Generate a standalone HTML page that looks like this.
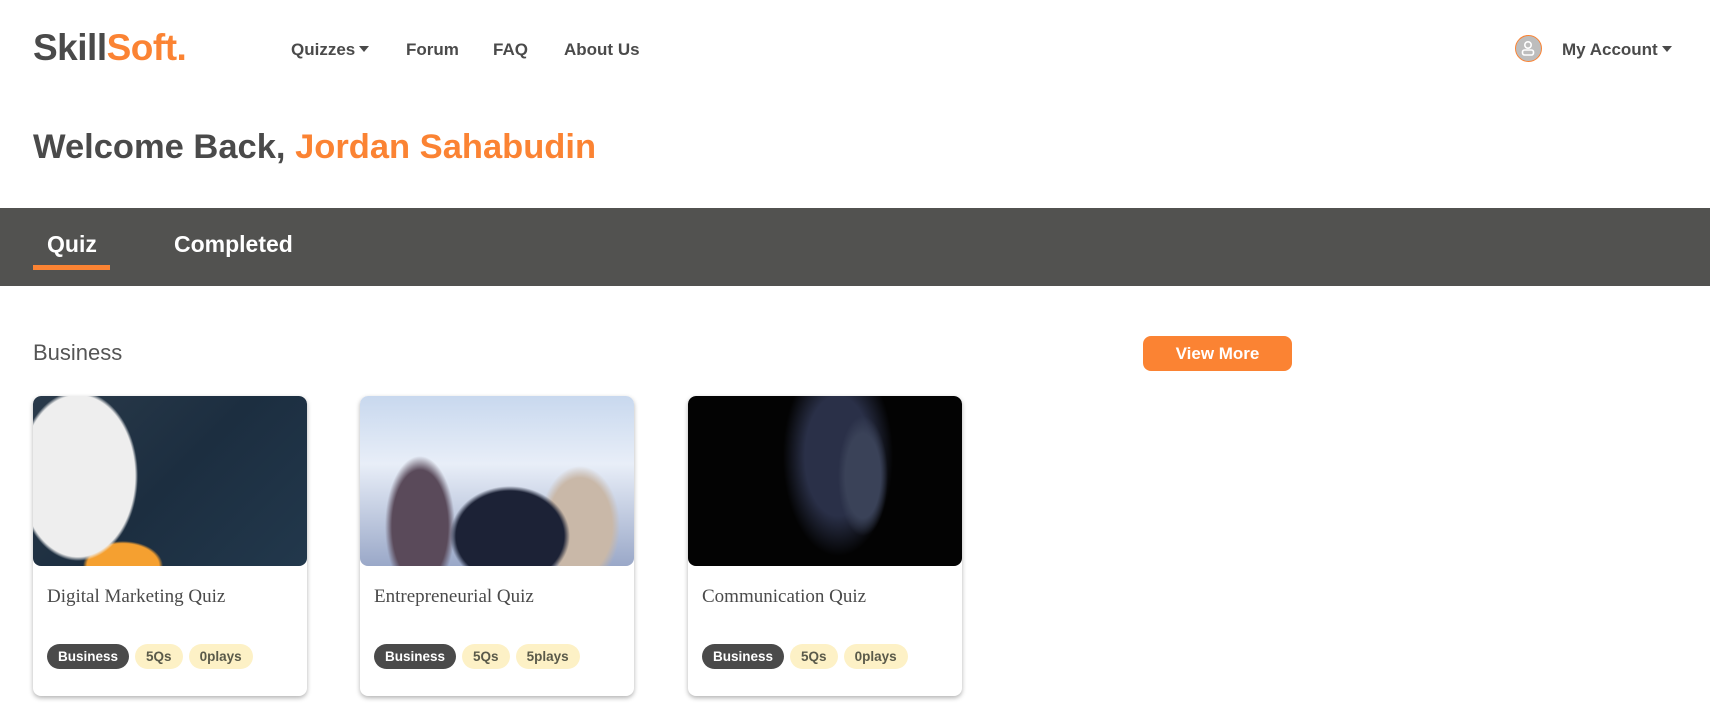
<!DOCTYPE html>
<html><head><meta charset="utf-8"><style>
*{margin:0;padding:0;box-sizing:border-box}
body{width:1710px;height:723px;background:#fff;font-family:"Liberation Sans",sans-serif;position:relative;overflow:hidden;color:#4a4a4a}
.abs{position:absolute;white-space:nowrap}
.logo{left:33px;top:27px;font-size:37px;font-weight:bold;color:#4a4a4a;letter-spacing:-0.5px}
.logo span{color:#fb8333}
.nav{top:40px;font-size:17px;font-weight:bold;color:#4a4a4a}
.caret{display:inline-block;width:0;height:0;border-left:5px solid transparent;border-right:5px solid transparent;border-top:6px solid #4a4a4a;vertical-align:middle;margin-left:4px;margin-top:-3px}
.welcome{left:33px;top:128px;font-size:34.5px;font-weight:bold;color:#4a4a4a}
.welcome span{color:#fb8333}
.bar{left:0;top:208px;width:1710px;height:78px;background:#525250}
.tab{top:231px;font-size:23px;font-weight:bold;color:#fff}
.uline{left:33px;top:265px;width:77px;height:5px;background:#fb8333}
.card{position:absolute;top:396px;width:274px;height:300px;background:#fff;border-radius:8px;box-shadow:0 2px 5px rgba(0,0,0,.3);overflow:hidden}
.img{height:170px;border-radius:8px}
.title{position:absolute;left:14px;top:190px;font-family:"Liberation Serif",serif;font-size:19px;color:#4a4a4a}
.pills{position:absolute;left:14px;top:248px;display:flex;gap:6px}
.pill{height:25px;line-height:25px;border-radius:13px;padding:0 11px;font-size:13.5px;font-weight:bold;background:#fdf1c6;color:#5a5a4a}
.pill.d{background:#4a4a4a;color:#fff}
</style></head><body>
<div class="abs logo">Skill<span>Soft.</span></div>
<div class="abs nav" style="left:291px">Quizzes<span class="caret"></span></div>
<div class="abs nav" style="left:406px">Forum</div>
<div class="abs nav" style="left:493px">FAQ</div>
<div class="abs nav" style="left:564px">About Us</div>
<div class="abs" style="left:1515px;top:35px;width:27px;height:27px;border-radius:50%;background:#bdbdbd;border:1.5px solid #fb8333">
<svg width="24" height="24" viewBox="0 0 24 24" style="position:absolute;left:0;top:0"><circle cx="12" cy="9" r="3.2" fill="none" stroke="#fff" stroke-width="1.6"/><rect x="6.5" y="14" width="11" height="5" rx="2" fill="none" stroke="#fff" stroke-width="1.6"/></svg></div>
<div class="abs nav" style="left:1562px">My Account<span class="caret"></span></div>
<div class="abs welcome">Welcome Back, <span>Jordan Sahabudin</span></div>
<div class="abs bar"></div>
<div class="abs tab" style="left:47px">Quiz</div>
<div class="abs tab" style="left:174px">Completed</div>
<div class="abs uline"></div>
<div class="abs" style="left:33px;top:340px;font-size:22px;color:#555">Business</div>
<div class="abs" style="left:1143px;top:336px;width:149px;height:35px;border-radius:8px;background:#fb8333;color:#fff;font-weight:bold;font-size:17px;text-align:center;line-height:35px">View More</div>

<div class="card" style="left:33px">
<div class="img" style="background:radial-gradient(ellipse 60px 85px at 45px 80px,#eeeeee 95%,transparent 100%),radial-gradient(ellipse 40px 25px at 90px 170px,#f5a030 90%,transparent 100%),linear-gradient(135deg,#2a3a4a,#1c2e40 50%,#22384c)"></div>
<div class="title">Digital Marketing Quiz</div>
<div class="pills"><div class="pill d">Business</div><div class="pill">5Qs</div><div class="pill">0plays</div></div>
</div>
<div class="card" style="left:360px">
<div class="img" style="background:radial-gradient(ellipse 60px 50px at 150px 140px,#1c2236 90%,transparent 100%),radial-gradient(ellipse 40px 60px at 220px 130px,#c9b8a8 80%,transparent 100%),radial-gradient(ellipse 35px 70px at 60px 130px,#5a4a5a 80%,transparent 100%),linear-gradient(180deg,#c8d8ee,#e8eef8 40%,#9aa8c8)"></div>
<div class="title">Entrepreneurial Quiz</div>
<div class="pills"><div class="pill d">Business</div><div class="pill">5Qs</div><div class="pill">5plays</div></div>
</div>
<div class="card" style="left:688px">
<div class="img" style="background:radial-gradient(ellipse 25px 60px at 175px 80px,#3a4258 70%,transparent 100%),radial-gradient(ellipse 55px 100px at 150px 60px,#2a3048 60%,transparent 100%),#030303"></div>
<div class="title">Communication Quiz</div>
<div class="pills"><div class="pill d">Business</div><div class="pill">5Qs</div><div class="pill">0plays</div></div>
</div>
</body></html>
